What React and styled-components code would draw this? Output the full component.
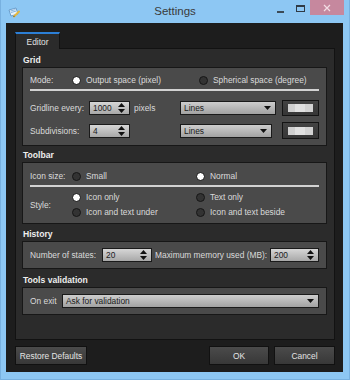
import React from 'react';
import styled, { createGlobalStyle } from 'styled-components';

const GlobalStyle = createGlobalStyle`
  html, body { margin: 0; padding: 0; background: #8dc7f3; }
  body { width: 350px; height: 380px; overflow: hidden; font-family: "Liberation Sans", Arial, sans-serif; }
  *, *::before, *::after { box-sizing: border-box; }
`;

const Window = styled.div`
  width: 350px;
  height: 380px;
  background: #8dc7f3;
  border: 1px solid #78b1e0;
  border-top: none;
  display: flex;
  flex-direction: column;
`;

const TitleBar = styled.div`
  height: 23px;
  flex: none;
  display: grid;
  grid-template-columns: 1fr auto 1fr;
  align-items: start;
`;

const TitleIcon = styled.div`
  padding: 7px 0 0 7px;
  display: flex;
`;

const TitleText = styled.div`
  font-size: 11.5px;
  line-height: 23px;
  color: #3a3a3a;
`;

const Controls = styled.div`
  justify-self: end;
  display: flex;
  padding-right: 5px;
`;

const CtrlButton = styled.div`
  width: ${p => p.$w}px;
  height: 15px;
  display: flex;
  justify-content: center;
  align-items: flex-start;
  background: ${p => p.$bg || 'transparent'};
`;

const MinGlyph = styled.div`
  width: 7px;
  height: 2px;
  margin-top: 11px;
  background: #3c4a56;
`;

const MaxGlyph = styled.div`
  width: 9px;
  height: 7px;
  margin-top: 5px;
  border: 1px solid #2f3a44;
  border-top-width: 2px;
`;

const Client = styled.div`
  flex: 1;
  margin: 0 6px 7px 5px;
  background: #1d1d1d;
  padding: 9px 8px 7px 9px;
  display: flex;
  flex-direction: column;
`;

const TabBar = styled.div`
  display: flex;
  height: 16px;
  flex: none;
`;

const Tab = styled.div`
  position: relative;
  z-index: 1;
  width: 45px;
  height: 17px;
  margin-bottom: -1px;
  background: #2b2b2b;
  border-top: 2px solid #2c7fd6;
  border-left: 1px solid #121212;
  border-right: 1px solid #121212;
  color: #e2e2e2;
  font-size: 8.4px;
  display: flex;
  align-items: center;
  justify-content: center;
`;

const TabPage = styled.div`
  flex: 1;
  background: #2b2b2b;
  border: 1px solid #121212;
  padding: 5px 7px 0 6px;
  display: flex;
  flex-direction: column;
`;

const Section = styled.section`
  margin-top: ${p => p.$mt || 0}px;
  display: flex;
  flex-direction: column;
`;

const GroupTitle = styled.div`
  height: 13px;
  line-height: 13px;
  padding-left: 1px;
  font-size: 8.6px;
  font-weight: bold;
  color: #eeeeee;
`;

const GroupBox = styled.div`
  height: ${p => p.$h}px;
  background: #4a4a4a;
  border: 1px solid #171717;
  padding: ${p => p.$pt || 0}px 7px 0 7px;
  display: ${p => (p.$row ? 'flex' : 'block')};
  align-items: center;
`;

const Label = styled.span`
  font-size: 8.4px;
  color: #dadada;
  white-space: nowrap;
  width: ${p => (p.$w ? `${p.$w}px` : 'auto')};
  flex: none;
  margin-left: ${p => p.$ml || 0}px;
`;

const Separator = styled.div`
  height: 2px;
  background: #d2d2d2;
  margin-top: ${p => p.$mt || 0}px;
`;

const ModeRow = styled.div`
  height: 14px;
  display: grid;
  grid-template-columns: 42px 127px 1fr;
  align-items: center;
`;

const FieldRow = styled.div`
  height: ${p => p.$h}px;
  margin-top: ${p => p.$mt}px;
  display: grid;
  grid-template-columns: 150px 1fr;
  align-items: center;
`;

const LeftCell = styled.div`
  display: flex;
  align-items: center;
`;

const RightCell = styled.div`
  display: flex;
  align-items: center;
  justify-content: space-between;
`;

const ToolbarGrid = styled.div`
  display: grid;
  grid-template-columns: 42px 124px 1fr;
  grid-template-rows: 12px 9px 12px 3px 12px;
  align-items: center;
`;

const GridSeparator = styled(Separator)`
  grid-column: 1 / -1;
  grid-row: 2;
  align-self: start;
`;

const StyleLabel = styled(Label)`
  grid-column: 1;
  grid-row: 3 / 6;
`;

const OptionCell = styled.div`
  grid-column: ${p => p.$col};
  grid-row: ${p => p.$row};
  display: flex;
  align-items: center;
  gap: 5px;
`;

const RadioDot = styled.span`
  width: 9px;
  height: 9px;
  border-radius: 50%;
  flex: none;
  background: ${p => (p.$on ? '#ffffff' : '#333333')};
  border: ${p => (p.$on ? '1.5px solid #0e0e0e' : '1px solid #161616')};
`;

const Spin = styled.div`
  width: ${p => p.$w}px;
  height: 14px;
  flex: none;
  border: 1px solid #1a1a1a;
  background: linear-gradient(#d6d6d6, #a8a8a8);
  display: flex;
  align-items: center;
  justify-content: space-between;
  padding: 0 4px 0 3px;
  margin-left: ${p => (p.$auto ? 'auto' : '0')};
  font-size: 8.4px;
  color: #1b1b1b;
`;

const Combo = styled.div`
  width: ${p => (p.$w ? `${p.$w}px` : 'auto')};
  flex: ${p => (p.$w ? 'none' : '1')};
  height: 14px;
  border: 1px solid #1a1a1a;
  background: linear-gradient(#cdcdcd, #a2a2a2);
  display: flex;
  align-items: center;
  justify-content: space-between;
  padding: 0 4px 0 3px;
  font-size: 8.4px;
  color: #1b1b1b;
`;

const ColorButton = styled.div`
  width: 37px;
  height: ${p => p.$h}px;
  border: 1px solid #141414;
  background: linear-gradient(#434343, #363636);
  display: flex;
  align-items: center;
  justify-content: center;
`;

const Swatch = styled.div`
  width: 25px;
  height: 8px;
  background: linear-gradient(90deg, #cfcfcf 0 30%, #e0e0e0 30% 70%, #d2d2d2 70%);
`;

const Footer = styled.div`
  height: 19px;
  margin-top: 6px;
  flex: none;
  display: flex;
  justify-content: space-between;
`;

const ButtonGroup = styled.div`
  display: flex;
  gap: 5px;
`;

const Button = styled.button`
  width: ${p => p.$w}px;
  height: 19px;
  margin: 0;
  padding: 0;
  border: 1px solid #111111;
  background: linear-gradient(#4b4b4b, #383838);
  color: #e4e4e4;
  font-family: "Liberation Sans", Arial, sans-serif;
  font-size: 8.4px;
`;

const SpinArrows = () => (
  <svg width="7" height="10" viewBox="0 0 7 10">
    <path d="M0 4 L3.5 0 L7 4 Z M0 6 L7 6 L3.5 10 Z" fill="#111" />
  </svg>
);

const DropArrow = () => (
  <svg width="7" height="4" viewBox="0 0 7 4">
    <path d="M0 0 L7 0 L3.5 4 Z" fill="#111" />
  </svg>
);

const AppGlyph = () => (
  <svg width="13" height="11" viewBox="0 0 13 11">
    <path d="M1 3 L8 1 L10 7 L3 9 Z" fill="#e8f2fb" stroke="#5b8fc0" strokeWidth="0.8" />
    <path d="M2.5 4 L7.5 2.6 M3 5.5 L8 4.1" stroke="#6fa6d8" strokeWidth="0.8" />
    <path d="M6 9.5 L11 4.5" stroke="#e6b73c" strokeWidth="2" strokeLinecap="round" />
    <path d="M5.6 10 L6.4 8.9" stroke="#555" strokeWidth="1" />
  </svg>
);

const CloseGlyph = () => (
  <svg width="8" height="8" viewBox="0 0 8 8" style={{ marginTop: 4 }}>
    <path d="M1 1 L7 7 M7 1 L1 7" stroke="#f3dde4" strokeWidth="1.2" />
  </svg>
);

const Radio = ({ on, children, col, row }) => (
  <OptionCell $col={col} $row={row}>
    <RadioDot $on={on} />
    <Label>{children}</Label>
  </OptionCell>
);

export default function App() {
  return (
    <>
      <GlobalStyle />
      <Window>
        <TitleBar>
          <TitleIcon><AppGlyph /></TitleIcon>
          <TitleText>Settings</TitleText>
          <Controls>
            <CtrlButton $w={19}><MinGlyph /></CtrlButton>
            <CtrlButton $w={20}><MaxGlyph /></CtrlButton>
            <CtrlButton $w={34} $bg="#c6889e"><CloseGlyph /></CtrlButton>
          </Controls>
        </TitleBar>
        <Client>
          <TabBar>
            <Tab>Editor</Tab>
          </TabBar>
          <TabPage>
            <Section>
              <GroupTitle>Grid</GroupTitle>
              <GroupBox $h={79} $pt={5}>
                <ModeRow>
                  <Label>Mode:</Label>
                  <Radio on col={2} row={1}>Output space (pixel)</Radio>
                  <Radio col={3} row={1}>Spherical space (degree)</Radio>
                </ModeRow>
                <Separator $mt={2} />
                <FieldRow $h={16} $mt={9}>
                  <LeftCell>
                    <Label $w={59}>Gridline every:</Label>
                    <Spin $w={41}>1000<SpinArrows /></Spin>
                    <Label $ml={4}>pixels</Label>
                  </LeftCell>
                  <RightCell>
                    <Combo $w={96}>Lines<DropArrow /></Combo>
                    <ColorButton $h={16}><Swatch /></ColorButton>
                  </RightCell>
                </FieldRow>
                <FieldRow $h={17} $mt={6}>
                  <LeftCell>
                    <Label $w={59}>Subdivisions:</Label>
                    <Spin $w={41}>4<SpinArrows /></Spin>
                  </LeftCell>
                  <RightCell>
                    <Combo $w={92}>Lines<DropArrow /></Combo>
                    <ColorButton $h={17}><Swatch /></ColorButton>
                  </RightCell>
                </FieldRow>
              </GroupBox>
            </Section>

            <Section $mt={3}>
              <GroupTitle>Toolbar</GroupTitle>
              <GroupBox $h={62} $pt={7}>
                <ToolbarGrid>
                  <Label>Icon size:</Label>
                  <Radio col={2} row={1}>Small</Radio>
                  <Radio on col={3} row={1}>Normal</Radio>
                  <GridSeparator $mt={3} />
                  <StyleLabel>Style:</StyleLabel>
                  <Radio on col={2} row={3}>Icon only</Radio>
                  <Radio col={3} row={3}>Text only</Radio>
                  <Radio col={2} row={5}>Icon and text under</Radio>
                  <Radio col={3} row={5}>Icon and text beside</Radio>
                </ToolbarGrid>
              </GroupBox>
            </Section>

            <Section $mt={4}>
              <GroupTitle>History</GroupTitle>
              <GroupBox $h={28} $row>
                <Label $w={72}>Number of states:</Label>
                <Spin $w={50}>20<SpinArrows /></Spin>
                <Label $ml={3}>Maximum memory used (MB):</Label>
                <Spin $w={49} $auto>200<SpinArrows /></Spin>
              </GroupBox>
            </Section>

            <Section $mt={5}>
              <GroupTitle>Tools validation</GroupTitle>
              <GroupBox $h={28} $row>
                <Label $w={32}>On exit</Label>
                <Combo>Ask for validation<DropArrow /></Combo>
              </GroupBox>
            </Section>
          </TabPage>
          <Footer>
            <Button $w={72}>Restore Defaults</Button>
            <ButtonGroup>
              <Button $w={60}>OK</Button>
              <Button $w={61}>Cancel</Button>
            </ButtonGroup>
          </Footer>
        </Client>
      </Window>
    </>
  );
}
